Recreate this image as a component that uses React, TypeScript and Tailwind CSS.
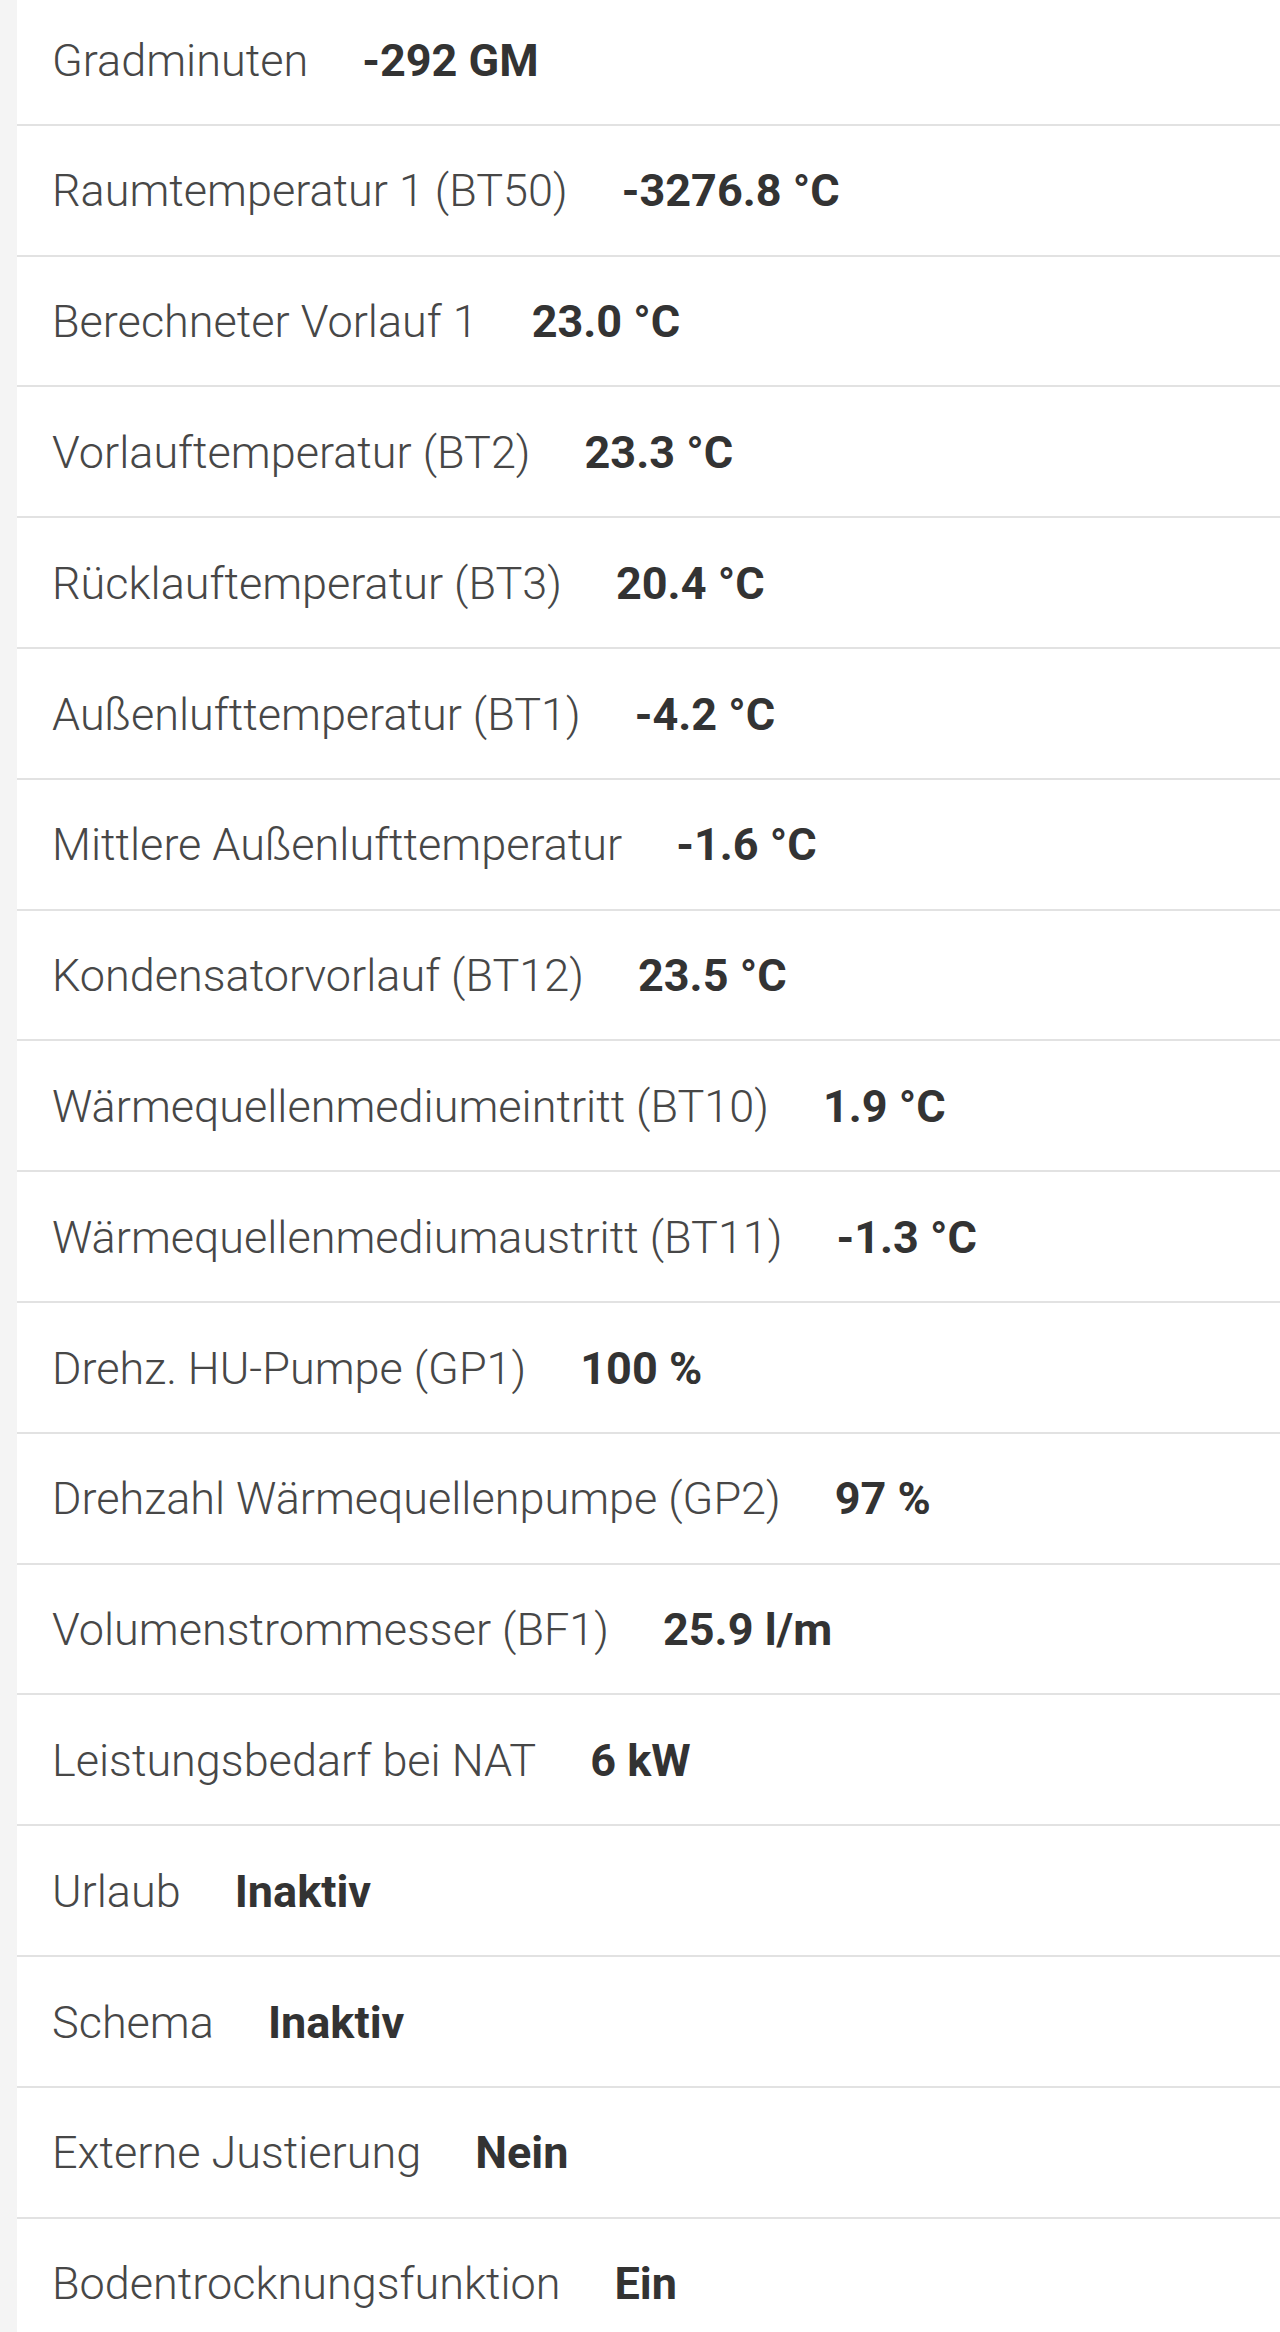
const rows = [
  ["Gradminuten", "-292 GM"],
  ["Raumtemperatur 1 (BT50)", "-3276.8 °C"],
  ["Berechneter Vorlauf 1", "23.0 °C"],
  ["Vorlauftemperatur (BT2)", "23.3 °C"],
  ["Rücklauftemperatur (BT3)", "20.4 °C"],
  ["Außenlufttemperatur (BT1)", "-4.2 °C"],
  ["Mittlere Außenlufttemperatur", "-1.6 °C"],
  ["Kondensatorvorlauf (BT12)", "23.5 °C"],
  ["Wärmequellenmediumeintritt (BT10)", "1.9 °C"],
  ["Wärmequellenmediumaustritt (BT11)", "-1.3 °C"],
  ["Drehz. HU-Pumpe (GP1)", "100 %"],
  ["Drehzahl Wärmequellenpumpe (GP2)", "97 %"],
  ["Volumenstrommesser (BF1)", "25.9 l/m"],
  ["Leistungsbedarf bei NAT", "6 kW"],
  ["Urlaub", "Inaktiv"],
  ["Schema", "Inaktiv"],
  ["Externe Justierung", "Nein"],
  ["Bodentrocknungsfunktion", "Ein"],
];

export default function App() {
  return (
    <div className="flex h-[2332px] overflow-hidden bg-white font-['Roboto',sans-serif]">
      <div className="w-[17px] shrink-0 bg-[#f4f4f4]" />
      <ul className="-mt-[5px] flex-1">
        {rows.map(([label, value]) => (
          <li
            key={label}
            className="flex h-[130.8px] items-center border-b-2 border-[#e2e2e2] pl-[35px] pt-[2px] text-[45px]"
          >
            <span className="font-light text-[#474747]">{label}</span>
            <span className="ml-[54px] font-bold text-[#333]">{value}</span>
          </li>
        ))}
      </ul>
    </div>
  );
}
